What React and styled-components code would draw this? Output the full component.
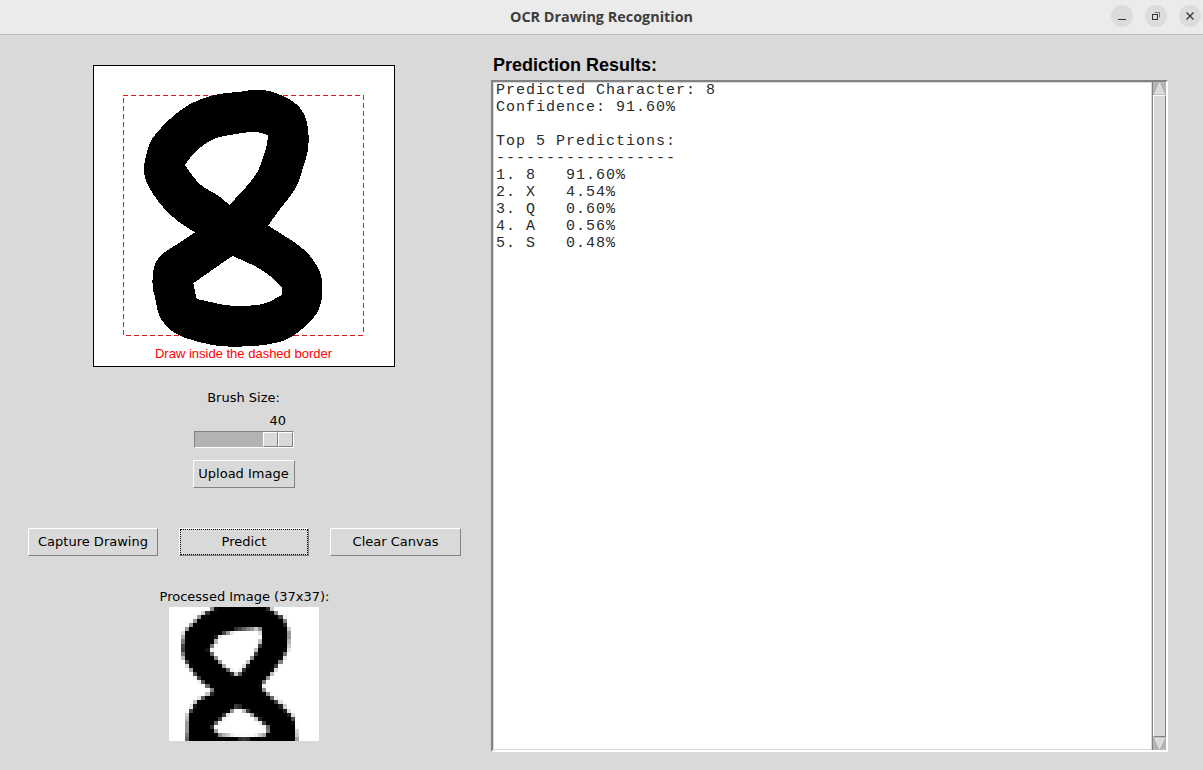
import React from "react";
import styled, { createGlobalStyle } from "styled-components";

const GlobalStyle = createGlobalStyle`
  html, body {
    margin: 0;
    padding: 0;
    height: 100%;
    background: #d9d9d9;
    overflow: hidden;
  }
`;

const Win = styled.div`
  width: 1203px;
  height: 770px;
  display: flex;
  flex-direction: column;
  background: #d9d9d9;
  overflow: hidden;
  font-family: "DejaVu Sans", sans-serif;
  font-size: 13px;
  color: #000;
`;

const TitleBar = styled.div`
  height: 34px;
  flex: none;
  display: flex;
  align-items: center;
  justify-content: flex-end;
  position: relative;
  background: #ebebeb;
  border-bottom: 1px solid #bdbdbd;
  padding-right: 2px;
`;

const Title = styled.div`
  position: absolute;
  left: 0;
  right: 0;
  top: 8px;
  text-align: center;
  font-family: "Open Sans", sans-serif;
  font-weight: 700;
  font-size: 14.4px;
  line-height: 18px;
  color: #3d3d3d;
`;

const WinControls = styled.div`
  display: flex;
  gap: 12px;
  position: relative;
  margin-top: -3px;
`;

const WinBtn = styled.div`
  width: 22px;
  height: 22px;
  border-radius: 50%;
  background: #dcdcdc;
  display: flex;
  align-items: center;
  justify-content: center;
`;

const Body = styled.div`
  flex: 1;
  display: flex;
  min-height: 0;
`;

const Left = styled.div`
  width: 487px;
  flex: none;
  display: flex;
  flex-direction: column;
  align-items: center;
  padding-top: 30px;
`;

const Canvas = styled.div`
  width: 302px;
  height: 302px;
  box-sizing: border-box;
  border: 1px solid #000;
  background: #fff;
  position: relative;
`;

const StrokeSvg = styled.svg`
  position: absolute;
  left: 0;
  top: 0;
  width: 300px;
  height: 300px;
`;

const Hint = styled.div`
  position: absolute;
  left: 0;
  right: 0;
  top: 280px;
  text-align: center;
  font-family: "Liberation Sans", sans-serif;
  font-size: 13px;
  line-height: 15px;
  color: #ff0000;
`;

const BrushLabel = styled.div`
  margin-top: 22px;
  line-height: 17px;
  text-align: center;
`;

const SliderWrap = styled.div`
  width: 100px;
  margin-top: 6px;
  display: flex;
  flex-direction: column;
`;

const SliderValue = styled.div`
  line-height: 17px;
  padding-left: 76px;
`;

const Trough = styled.div`
  height: 17px;
  margin-top: 2px;
  box-sizing: border-box;
  background: #b3b3b3;
  border: 1px solid;
  border-color: #828282 #fff #fff #828282;
  position: relative;
`;

const Thumb = styled.div`
  position: absolute;
  top: 0;
  right: 0;
  width: 30px;
  height: 15px;
  box-sizing: border-box;
  display: flex;
`;

const ThumbHalf = styled.div`
  flex: 1;
  background: #d9d9d9;
  border: 1px solid;
  border-color: #fff #828282 #828282 #fff;
`;

const Btn = styled.div`
  box-sizing: border-box;
  height: 28px;
  width: ${(p) => p.$w}px;
  padding-bottom: 2px;
  background: #d9d9d9;
  border: 1px solid;
  border-color: #fff #828282 #828282 #fff;
  display: flex;
  align-items: center;
  justify-content: center;
  position: relative;
  line-height: 17px;
`;

const FocusRing = styled.span`
  position: absolute;
  inset: 0;
  border: 1px dotted #000;
`;

const UploadBtn = styled(Btn)`
  margin-top: 12px;
`;

const ButtonRow = styled.div`
  margin-top: 40px;
  display: flex;
  width: 433px;
  margin-left: 2px;
  justify-content: space-between;
`;

const ProcessedLabel = styled.div`
  margin-top: 32px;
  line-height: 17px;
  margin-left: 2px;
`;

const ProcessedSvg = styled.svg`
  display: block;
  width: 150px;
  height: 134px;
  margin-top: 2px;
  margin-left: 1px;
`;

const Right = styled.div`
  flex: 1;
  display: flex;
  flex-direction: column;
  padding: 19px 35px 18px 4px;
  min-width: 0;
`;

const Heading = styled.div`
  font-family: "Liberation Sans", sans-serif;
  font-weight: 700;
  font-size: 18px;
  line-height: 22px;
  margin-left: 2px;
  margin-bottom: 4px;
`;

const Frame = styled.div`
  display: flex;
  box-sizing: border-box;
  border: 2px solid;
  border-color: #828282 #fff #fff #828282;
  height: 672px;
  flex: none;
`;

const Output = styled.pre`
  flex: 1;
  margin: 0;
  box-sizing: border-box;
  background: #fff;
  border: 1px solid #d9d9d9;
  padding: 0 1px 0 2px;
  font-family: "Liberation Mono", monospace;
  font-size: 15px;
  letter-spacing: 1px;
  line-height: 17px;
  color: #2b2b2b;
  overflow: hidden;
  position: relative;
  top: 0;
  & > span {
    display: block;
    margin-top: -1px;
  }
`;

const Scrollbar = styled.div`
  width: 14px;
  flex: none;
  display: flex;
  flex-direction: column;
  background: #c3c3c3;
  border-left: 1px solid #828282;
  box-sizing: border-box;
`;

const ArrowSvg = styled.svg`
  display: block;
  width: 13px;
  height: 13px;
  flex: none;
`;

const ScrollThumb = styled.div`
  flex: 1;
  background: #d9d9d9;
  border: 1px solid;
  border-color: #fff #828282 #828282 #fff;
`;

const OUTER = "490,87 540,92 590,112 625,135 645,165 655,205 657,265 640,320 625,370 605,405 570,445 535,497 535,497 580,525 640,565 675,605 697,650 697,720 680,765 650,795 610,830 560,850 480,860 390,860 320,845 260,825 225,795 205,765 195,710 186,680 190,620 210,585 250,560 315,517 315,517 270,490 225,450 190,405 165,360 160,320 172,270 185,235 225,190 270,150 325,118 390,100 460,95";
const INNER_TOP = "375,233 420,225 495,213 533,225 533,225 533,250 520,290 505,335 470,380 418,435 418,435 385,405 335,380 305,345 285,315 285,315 310,280 340,255";
const INNER_BOTTOM = "428,588 428,588 460,602 510,625 550,655 577,685 577,685 575,705 575,705 525,733 470,738 410,737 370,728 320,717 320,717 310,670 310,670 345,645 395,610";

// rounds off the traced outline; a doubled point stays a sharp tip
const toPath = (pts) => {
  const p = pts.split(" ").map((s) => s.split(",").map(Number));
  const mid = (a, b) => `${(a[0] + b[0]) / 2},${(a[1] + b[1]) / 2}`;
  let d = `M${mid(p[p.length - 1], p[0])}`;
  p.forEach((pt, i) => {
    d += ` Q${pt[0]},${pt[1]} ${mid(pt, p[(i + 1) % p.length])}`;
  });
  return d + " Z";
};

// processed preview, traced in 3x crop coords
const P_OUTER = [[205,60],[345,60],[400,100],[415,140],[412,190],[395,225],[370,260],[335,300],[345,320],[400,365],[432,400],[440,480],[110,480],[115,385],[140,350],[190,320],[140,275],[105,225],[95,190],[105,140],[150,95]];
const P_TOP = [[250,138],[332,128],[338,160],[312,212],[262,274],[218,242],[176,195],[205,153]];
const P_BOTTOM = [[262,364],[302,383],[360,430],[344,452],[280,458],[205,450],[186,425],[225,388]];

const inside = (poly, x, y) => {
  let hit = false;
  for (let i = 0, j = poly.length - 1; i < poly.length; j = i++) {
    const [xi, yi] = poly[i];
    const [xj, yj] = poly[j];
    if (yi > y !== yj > y && x < ((xj - xi) * (y - yi)) / (yj - yi) + xi) hit = !hit;
  }
  return hit;
};

const COLS = 37;
const ROWS = 33;
const CELL = 450 / COLS;

const coverage = () => {
  const out = [];
  for (let r = 0; r < ROWS; r++) {
    const row = [];
    for (let c = 0; c < COLS; c++) {
      let n = 0;
      for (let a = 0; a < 5; a++) {
        for (let b = 0; b < 5; b++) {
          const x = 57 + (c + (a + 0.5) / 5) * CELL;
          const y = 66 + (r + (b + 0.5) / 5) * CELL;
          if (inside(P_OUTER, x, y) && !inside(P_TOP, x, y) && !inside(P_BOTTOM, x, y)) n++;
        }
      }
      row.push(n / 25);
    }
    out.push(row);
  }
  return out;
};

const cells = (() => {
  const cov = coverage();
  const at = (r, c) => (r < 0 || c < 0 || r >= ROWS || c >= COLS ? 0 : cov[r][c]);
  const list = [];
  for (let r = 0; r < ROWS; r++) {
    for (let c = 0; c < COLS; c++) {
      // slight halo round the strokes, like the downscaled bitmap
      const near = (at(r - 1, c) + at(r + 1, c) + at(r, c - 1) + at(r, c + 1)) / 4;
      const v = Math.min(1, at(r, c) * 0.96 + near * 0.05);
      if (v > 0.01) list.push({ r, c, g: Math.round(255 * (1 - v)) });
    }
  }
  return list;
})();

const RESULT = `Predicted Character: 8
Confidence: 91.60%

Top 5 Predictions:
------------------
1. 8   91.60%
2. X   4.54%
3. Q   0.60%
4. A   0.56%
5. S   0.48%`;

export default function App() {
  return (
    <Win>
      <GlobalStyle />
      <TitleBar>
        <Title>OCR Drawing Recognition</Title>
        <WinControls>
          <WinBtn>
            <svg width="12" height="12" viewBox="0 0 12 12">
              <path d="M2 9.5h8" stroke="#333" strokeWidth="1" fill="none" />
            </svg>
          </WinBtn>
          <WinBtn>
            <svg width="12" height="12" viewBox="0 0 12 12">
              <rect x="2.5" y="4.5" width="5" height="5" stroke="#333" fill="none" />
              <path d="M4.5 2.5h5v5" stroke="#777" fill="none" />
            </svg>
          </WinBtn>
          <WinBtn>
            <svg width="12" height="12" viewBox="0 0 12 12">
              <path d="M2.5 2.5l7 7M9.5 2.5l-7 7" stroke="#333" strokeWidth="1.3" fill="none" />
            </svg>
          </WinBtn>
        </WinControls>
      </TitleBar>
      <Body>
        <Left>
          <Canvas>
            <StrokeSvg viewBox="12 18 900 900" shapeRendering="crispEdges">
              <rect
                x="100"
                y="106"
                width="720"
                height="720"
                fill="none"
                stroke="#e01818"
                strokeWidth="3"
                strokeDasharray="15 9"
              />
              <path
                fillRule="evenodd"
                fill="#000"
                d={`${toPath(OUTER)} ${toPath(INNER_TOP)} ${toPath(INNER_BOTTOM)}`}
              />
            </StrokeSvg>
            <Hint>Draw inside the dashed border</Hint>
          </Canvas>
          <BrushLabel>Brush Size:</BrushLabel>
          <SliderWrap>
            <SliderValue>40</SliderValue>
            <Trough>
              <Thumb>
                <ThumbHalf />
                <ThumbHalf />
              </Thumb>
            </Trough>
          </SliderWrap>
          <UploadBtn $w={102}>Upload Image</UploadBtn>
          <ButtonRow>
            <Btn $w={130}>Capture Drawing</Btn>
            <Btn $w={130}>
              Predict
              <FocusRing />
            </Btn>
            <Btn $w={131}>Clear Canvas</Btn>
          </ButtonRow>
          <ProcessedLabel>Processed Image (37x37):</ProcessedLabel>
          <ProcessedSvg viewBox={`0 0 ${COLS} ${ROWS}`} preserveAspectRatio="none" shapeRendering="crispEdges">
            <rect width={COLS} height={ROWS} fill="#fff" />
            {cells.map((p) => (
              <rect
                key={`${p.r}-${p.c}`}
                x={p.c}
                y={p.r}
                width="1"
                height="1"
                fill={`rgb(${p.g},${p.g},${p.g})`}
              />
            ))}
          </ProcessedSvg>
        </Left>
        <Right>
          <Heading>Prediction Results:</Heading>
          <Frame>
            <Output>
              <span>{RESULT}</span>
            </Output>
            <Scrollbar>
              <ArrowSvg viewBox="0 0 14 13">
                <rect width="14" height="13" fill="#b3b3b3" />
                <path d="M7 1 L12 12 H2 Z" fill="#d9d9d9" stroke="#f2f2f2" strokeWidth="0.8" />
              </ArrowSvg>
              <ScrollThumb />
              <ArrowSvg viewBox="0 0 14 13">
                <rect width="14" height="13" fill="#b3b3b3" />
                <path d="M7 12 L12 1 H2 Z" fill="#d9d9d9" stroke="#f2f2f2" strokeWidth="0.8" />
              </ArrowSvg>
            </Scrollbar>
          </Frame>
        </Right>
      </Body>
    </Win>
  );
}
